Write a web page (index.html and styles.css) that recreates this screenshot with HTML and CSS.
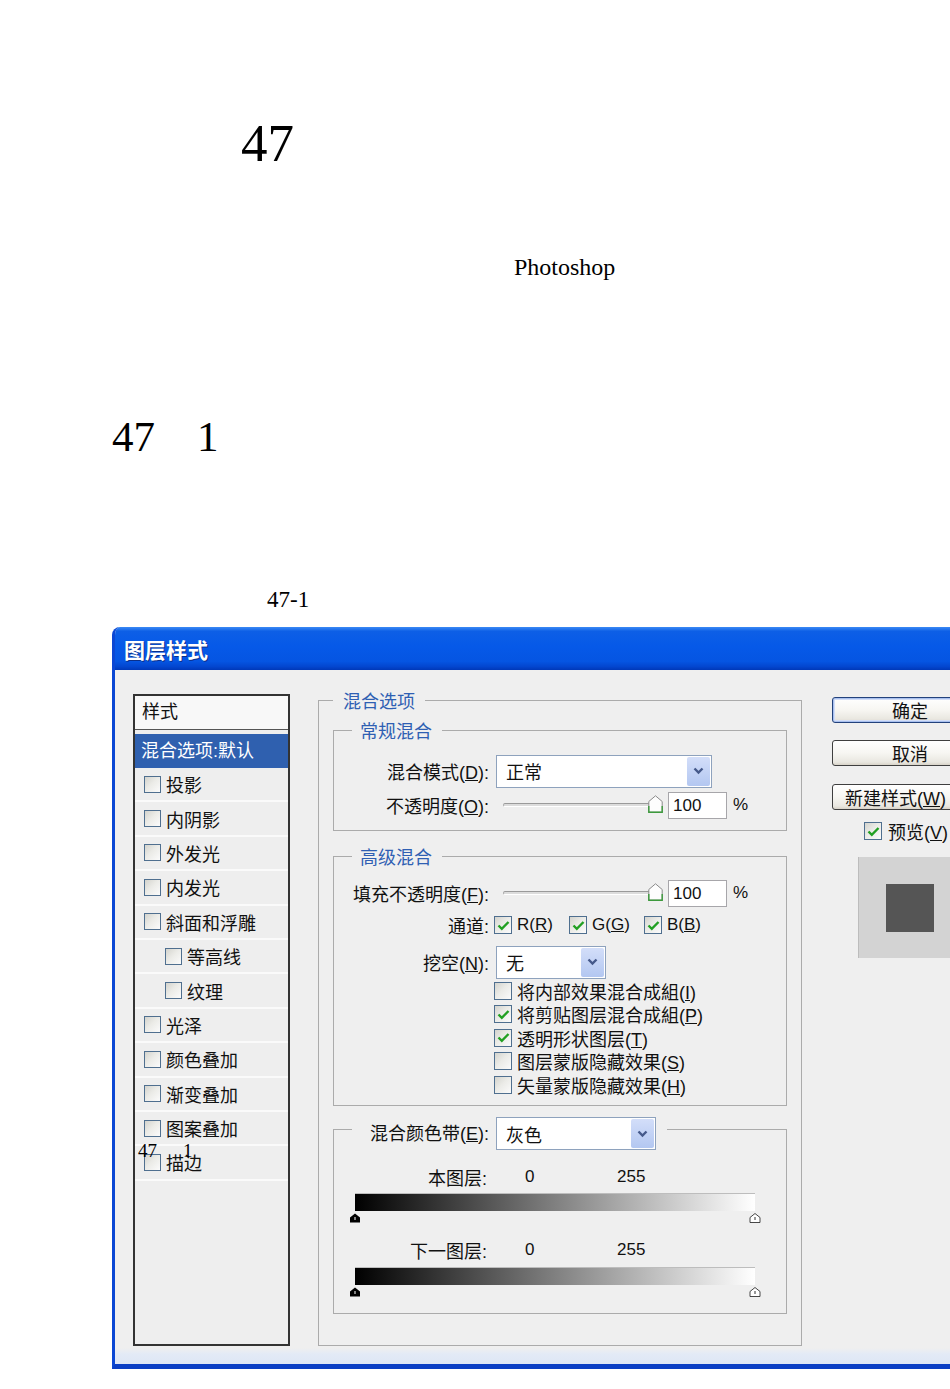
FILE: index.html
```html
<!DOCTYPE html>
<html lang="zh-CN">
<head>
<meta charset="utf-8">
<title>图层样式</title>
<link rel="stylesheet" href="styles.css">
</head>
<body>
<div class="page">
  <div class="t1">47</div>
  <div class="t2">Photoshop</div>
  <div class="t3">47<span class="gap">1</span></div>
  <div class="t4">47-1</div>

  <div class="dialog">
    <div class="titlebar">图层样式</div>
    <div class="dlg-body">
      <div class="stylelist">
        <div class="sl-head">样式</div>
        <div class="sl-sel">混合选项:默认</div>
        <div class="sl-row"><span class="cb"></span><span>投影</span></div>
        <div class="sl-row"><span class="cb"></span><span>内阴影</span></div>
        <div class="sl-row"><span class="cb"></span><span>外发光</span></div>
        <div class="sl-row"><span class="cb"></span><span>内发光</span></div>
        <div class="sl-row"><span class="cb"></span><span>斜面和浮雕</span></div>
        <div class="sl-row sub"><span class="cb"></span><span>等高线</span></div>
        <div class="sl-row sub"><span class="cb"></span><span>纹理</span></div>
        <div class="sl-row"><span class="cb"></span><span>光泽</span></div>
        <div class="sl-row"><span class="cb"></span><span>颜色叠加</span></div>
        <div class="sl-row"><span class="cb"></span><span>渐变叠加</span></div>
        <div class="sl-row"><span class="cb"></span><span>图案叠加</span></div>
        <div class="sl-row"><span class="cb"></span><span>描边</span></div>
        <span class="overlay">47<span class="o1">1</span></span>
      </div>

      <div class="main">
        <fieldset class="fs outer">
          <legend class="lg">混合选项</legend>

          <fieldset class="fs inner general">
            <legend class="lg">常规混合</legend>
            <div class="row h34">
              <span class="lbl">混合模式(<u>D</u>):</span>
              <div class="select w216"><span class="sv">正常</span><span class="arrow"><svg width="11" height="8" viewBox="0 0 11 8"><path d="M1.5 1.5 L5.5 5.5 L9.5 1.5" fill="none" stroke="#45598a" stroke-width="2.4"/></svg></span></div>
            </div>
            <div class="row h34">
              <span class="lbl">不透明度(<u>O</u>):</span>
              <div class="slider"><span class="track"></span><svg class="thumb" width="15" height="18" viewBox="0 0 15 18"><path d="M7.5 0.8 L14.2 6.5 L14.2 17.2 L0.8 17.2 L0.8 6.5 Z" fill="#fdfdfd" stroke="#8a8a8a"/><path d="M0.8 11 L0.8 17.2 L14.2 17.2 L14.2 11" fill="none" stroke="#3c9a3c" stroke-width="1.4"/></svg></div>
              <span class="num">100</span><span class="pct">%</span>
            </div>
          </fieldset>

          <fieldset class="fs inner advanced">
            <legend class="lg">高级混合</legend>
            <div class="row h30">
              <span class="lbl">填充不透明度(<u>F</u>):</span>
              <div class="slider"><span class="track"></span><svg class="thumb" width="15" height="18" viewBox="0 0 15 18"><path d="M7.5 0.8 L14.2 6.5 L14.2 17.2 L0.8 17.2 L0.8 6.5 Z" fill="#fdfdfd" stroke="#8a8a8a"/><path d="M0.8 11 L0.8 17.2 L14.2 17.2 L14.2 11" fill="none" stroke="#3c9a3c" stroke-width="1.4"/></svg></div>
              <span class="num">100</span><span class="pct">%</span>
            </div>
            <div class="row h34">
              <span class="lbl tight">通道:</span>
              <span class="ch"><span class="cb big"><svg width="13" height="11" viewBox="0 0 13 11"><path d="M1.5 5.5 L4.8 8.8 L11.5 2" fill="none" stroke="#22a022" stroke-width="2.4"/></svg></span><span>R(<u>R</u>)</span></span>
              <span class="ch"><span class="cb big"><svg width="13" height="11" viewBox="0 0 13 11"><path d="M1.5 5.5 L4.8 8.8 L11.5 2" fill="none" stroke="#22a022" stroke-width="2.4"/></svg></span><span>G(<u>G</u>)</span></span>
              <span class="ch"><span class="cb big"><svg width="13" height="11" viewBox="0 0 13 11"><path d="M1.5 5.5 L4.8 8.8 L11.5 2" fill="none" stroke="#22a022" stroke-width="2.4"/></svg></span><span>B(<u>B</u>)</span></span>
            </div>
            <div class="row h34 knock">
              <span class="lbl">挖空(<u>N</u>):</span>
              <div class="select w110"><span class="sv">无</span><span class="arrow"><svg width="11" height="8" viewBox="0 0 11 8"><path d="M1.5 1.5 L5.5 5.5 L9.5 1.5" fill="none" stroke="#45598a" stroke-width="2.4"/></svg></span></div>
            </div>
            <div class="chk"><span class="cb big"></span><span>将内部效果混合成組(<u>I</u>)</span></div>
            <div class="chk"><span class="cb big"><svg width="13" height="11" viewBox="0 0 13 11"><path d="M1.5 5.5 L4.8 8.8 L11.5 2" fill="none" stroke="#22a022" stroke-width="2.4"/></svg></span><span>将剪贴图层混合成組(<u>P</u>)</span></div>
            <div class="chk"><span class="cb big"><svg width="13" height="11" viewBox="0 0 13 11"><path d="M1.5 5.5 L4.8 8.8 L11.5 2" fill="none" stroke="#22a022" stroke-width="2.4"/></svg></span><span>透明形状图层(<u>T</u>)</span></div>
            <div class="chk"><span class="cb big"></span><span>图层蒙版隐藏效果(<u>S</u>)</span></div>
            <div class="chk"><span class="cb big"></span><span>矢量蒙版隐藏效果(<u>H</u>)</span></div>
          </fieldset>

          <fieldset class="fs inner band">
            <legend class="lg band-lg"><span class="band-in"><span class="lbl2">混合颜色带(<u>E</u>):</span><span class="select w160"><span class="sv">灰色</span><span class="arrow"><svg width="11" height="8" viewBox="0 0 11 8"><path d="M1.5 1.5 L5.5 5.5 L9.5 1.5" fill="none" stroke="#45598a" stroke-width="2.4"/></svg></span></span></span></legend>
            <div class="row vals">
              <span class="lbl3">本图层:</span><span class="v0">0</span><span class="v255">255</span>
            </div>
            <div class="grad"></div>
            <div class="tris">
              <svg width="12" height="10" viewBox="0 0 12 10"><path d="M6 0.5 L11 4.5 L11 9.5 L1 9.5 L1 4.5 Z" fill="#000"/><path d="M6 4 V7" stroke="#fff" stroke-width="1"/></svg>
              <svg width="12" height="10" viewBox="0 0 12 10"><path d="M6 0.5 L11 4.5 L11 9.5 L1 9.5 L1 4.5 Z" fill="#fff" stroke="#333" stroke-width="0.9"/><path d="M6 4 V7" stroke="#333" stroke-width="1"/></svg>
            </div>
            <div class="row vals second">
              <span class="lbl3">下一图层:</span><span class="v0">0</span><span class="v255">255</span>
            </div>
            <div class="grad g2"></div>
            <div class="tris">
              <svg width="12" height="10" viewBox="0 0 12 10"><path d="M6 0.5 L11 4.5 L11 9.5 L1 9.5 L1 4.5 Z" fill="#000"/><path d="M6 4 V7" stroke="#fff" stroke-width="1"/></svg>
              <svg width="12" height="10" viewBox="0 0 12 10"><path d="M6 0.5 L11 4.5 L11 9.5 L1 9.5 L1 4.5 Z" fill="#fff" stroke="#333" stroke-width="0.9"/><path d="M6 4 V7" stroke="#333" stroke-width="1"/></svg>
            </div>
          </fieldset>
        </fieldset>
      </div>

      <div class="side">
        <div class="btn def">确定</div>
        <div class="btn">取消</div>
        <div class="btn new"><span>新建样式(<u>W</u>)</span></div>
        <div class="preview-chk"><span class="cb big"><svg width="13" height="11" viewBox="0 0 13 11"><path d="M1.5 5.5 L4.8 8.8 L11.5 2" fill="none" stroke="#22a022" stroke-width="2.4"/></svg></span><span>预览(<u>V</u>)</span></div>
        <div class="preview"><div class="swatch"></div></div>
      </div>
    </div>
  </div>
</div>
</body>
</html>
```
FILE: styles.css
```css
* { box-sizing: border-box; }
html, body { margin: 0; padding: 0; background: #fff; }

.page {
  width: 950px;
  height: 1389px;
  overflow: hidden;
  font-family: "Liberation Serif", serif;
  color: #000;
}

.t1 { font-size: 53px; line-height: 53px; height: 53px; margin-top: 117px; padding-left: 241px; }
.t2 { font-size: 24px; line-height: 24px; height: 24px; margin-top: 85px; padding-left: 514px; }
.t3 { font-size: 43px; line-height: 43px; height: 43px; margin-top: 136px; padding-left: 112px; }
.t3 .gap { margin-left: 42px; }
.t4 { font-size: 23px; line-height: 23px; height: 23px; margin-top: 130px; padding-left: 267px; }

.dialog {
  margin-top: 16px;
  margin-left: 112px;
  width: 860px;
  border-left: 3px solid #0b47d4;
  border-bottom: 5px solid #0a3ec4;
  border-top-left-radius: 8px;
  background: #efefef;
  overflow: hidden;
  font-family: "Liberation Sans", "Noto Sans CJK SC", sans-serif;
  font-size: 18px;
  color: #111;
}

.titlebar {
  height: 43px;
  padding-left: 9px;
  display: flex;
  align-items: center;
  color: #fff;
  font-weight: bold;
  font-size: 21px;
  font-family: "Noto Sans CJK SC", sans-serif;
  background: linear-gradient(to bottom, #3b8af5 0%, #0d5fe6 10%, #0659e8 45%, #0555e2 80%, #0346cf 92%, #0038b8 100%);
  text-shadow: 1px 1px 0 #0a2f8a;
}

.dlg-body {
  display: flex;
  align-items: flex-start;
  height: 694px;
  padding-left: 18px;
  background: linear-gradient(to bottom, #efefef 0, #efefef 678px, #e3eaf6 684px, #dde6f5 100%);
}

/* style list */
.stylelist {
  position: relative;
  flex: none;
  margin-top: 24px;
  width: 157px;
  height: 652px;
  border: 2px solid #333;
  background: #eeeeee;
}
.sl-head {
  height: 34px;
  border-bottom: 1px solid #555;
  background: #f8f8f8;
  padding-left: 7px;
  line-height: 33px;
}
.sl-sel {
  margin-top: 4px;
  height: 34px;
  background: #2f60af;
  color: #fff;
  padding-left: 6px;
  line-height: 34px;
}
.sl-row {
  height: 34.4px;
  border-bottom: 2px solid #fafafa;
  display: flex;
  align-items: center;
  gap: 5px;
  padding-left: 9px;
}
.sl-row.sub { padding-left: 30px; }

.overlay {
  position: absolute;
  left: 3px;
  top: 445px;
  font-family: "Liberation Serif", serif;
  font-size: 19px;
  line-height: 19px;
  color: #000;
}
.overlay .o1 { margin-left: 26px; }

/* checkboxes */
.cb {
  flex: none;
  width: 17px;
  height: 17px;
  border: 1px solid #4f6f8f;
  background: linear-gradient(135deg, #d3d3cd 0%, #ebebe7 45%, #fbfbfb 100%);
  display: inline-flex;
  align-items: center;
  justify-content: center;
}
.cb.big { width: 18px; height: 18px; }

/* main fieldsets */
.main { flex: none; margin-left: 28px; margin-top: 18px; }

.fs {
  margin: 0;
  min-width: 0;
  border: 1px solid #ababab;
}
.lg {
  padding: 0 10px 0 8px;
  font-family: "Noto Sans CJK SC", sans-serif;
  font-size: 18px;
  line-height: 24px;
  color: #2f5fb3;
}
.outer { width: 484px; padding: 6px 14px 31px 14px; }
.outer > .lg { margin-left: 0; padding: 0 10px; }
.inner { width: 454px; }
.inner > .lg { margin-left: 18px; }
.general { padding: 12px 0 8px 0; }
.advanced { margin-top: 13px; padding: 10px 0 8.5px 0; }
.band { margin-top: 3px; padding: 15px 0 14px 0; }

.row { display: flex; align-items: center; }
.h34 { height: 34px; }
.h30 { height: 30px; }
.knock { margin-top: 3px; }

.lbl { flex: none; width: 155px; text-align: right; margin-right: 7px; white-space: nowrap; }
.lbl.tight { margin-right: 5px; }

.select {
  flex: none;
  display: flex;
  align-items: center;
  height: 33px;
  border: 1px solid #8ea2bd;
  background: #fff;
  color: #111;
}
.w216 { width: 216px; }
.w110 { width: 110px; }
.w160 { width: 160px; }
.select .sv { flex: 1; padding-left: 9px; }
.select .arrow {
  width: 23px;
  height: 29px;
  margin-right: 1px;
  border-radius: 2px;
  background: linear-gradient(#d3def9, #b3c7f1);
  display: flex;
  align-items: center;
  justify-content: center;
}

.slider {
  position: relative;
  flex: none;
  width: 168px;
  height: 20px;
  display: flex;
  align-items: center;
}
.track {
  margin-left: 7px;
  width: 147px;
  height: 4px;
  border-radius: 2px;
  border-top: 1px solid #9a9a9a;
  border-bottom: 1px solid #fff;
  border-left: 1px solid #aaa;
  background: #dcdcdc;
}
.thumb { position: absolute; left: 152px; top: 0; }

.num {
  flex: none;
  width: 59px;
  height: 27px;
  margin-left: 4px;
  padding-left: 4px;
  border: 1px solid #a7a6aa;
  background: #fff;
  font-size: 17px;
  line-height: 25px;
}
.pct { margin-left: 6px; font-size: 17px; }

.ch { flex: none; width: 75px; display: flex; align-items: center; gap: 5px; font-size: 17px; white-space: nowrap; }

.chk {
  height: 23.5px;
  display: flex;
  align-items: center;
  gap: 5px;
  margin-left: 160px;
  white-space: nowrap;
}

/* blend band */
.band-lg { margin-left: 18px; padding: 8px 11px 0 0; color: #111; }
.band-in { display: flex; align-items: center; }
.lbl2 { width: 137px; text-align: right; margin-right: 7px; white-space: nowrap; font-family: "Liberation Sans", "Noto Sans CJK SC", sans-serif; }

.vals { height: 24px; }
.vals.second { margin-top: 13px; }
.lbl3 { width: 153px; text-align: right; }
.v0 { margin-left: 38px; width: 92px; font-size: 17px; }
.v255 { font-size: 17px; }

.grad {
  margin-left: 21px;
  margin-top: 4px;
  width: 400px;
  height: 18px;
  border-top: 1px solid #bdbdbd;
  background: linear-gradient(to right, #000 0%, #808080 50%, #fff 100%);
}
.grad.g2 { margin-top: 5px; }
.tris {
  display: flex;
  justify-content: space-between;
  margin-left: 15px;
  margin-top: 2px;
  width: 412px;
  height: 12px;
}

/* side column */
.side { flex: none; margin-left: 30px; margin-top: 27px; width: 156px; }
.btn {
  height: 26px;
  border: 1px solid #3f3f3f;
  border-radius: 3px;
  background: linear-gradient(#ffffff 0%, #f7f6f2 50%, #e9e7e0 88%, #d8d3c8 100%);
  display: flex;
  align-items: center;
  justify-content: center;
  white-space: nowrap;
  overflow: hidden;
}
.btn.def {
  border-color: #23427c;
  box-shadow: inset 0 0 0 1px #a9c0ee, inset 0 0 0 2px #d3def7;
}
.btn + .btn { margin-top: 17px; }
.btn.new { margin-top: 18px; justify-content: flex-start; padding-left: 12px; }
.preview-chk {
  margin-top: 12px;
  margin-left: 32px;
  height: 18px;
  display: flex;
  align-items: center;
  gap: 6px;
  white-space: nowrap;
}
.preview {
  margin-top: 17px;
  margin-left: 26px;
  width: 102px;
  height: 101px;
  background: #d3d3d3;
  border-left: 1px solid #bcbcbc;
  display: flex;
  align-items: center;
  justify-content: center;
}
.swatch { width: 48px; height: 48px; background: #555; }
```
